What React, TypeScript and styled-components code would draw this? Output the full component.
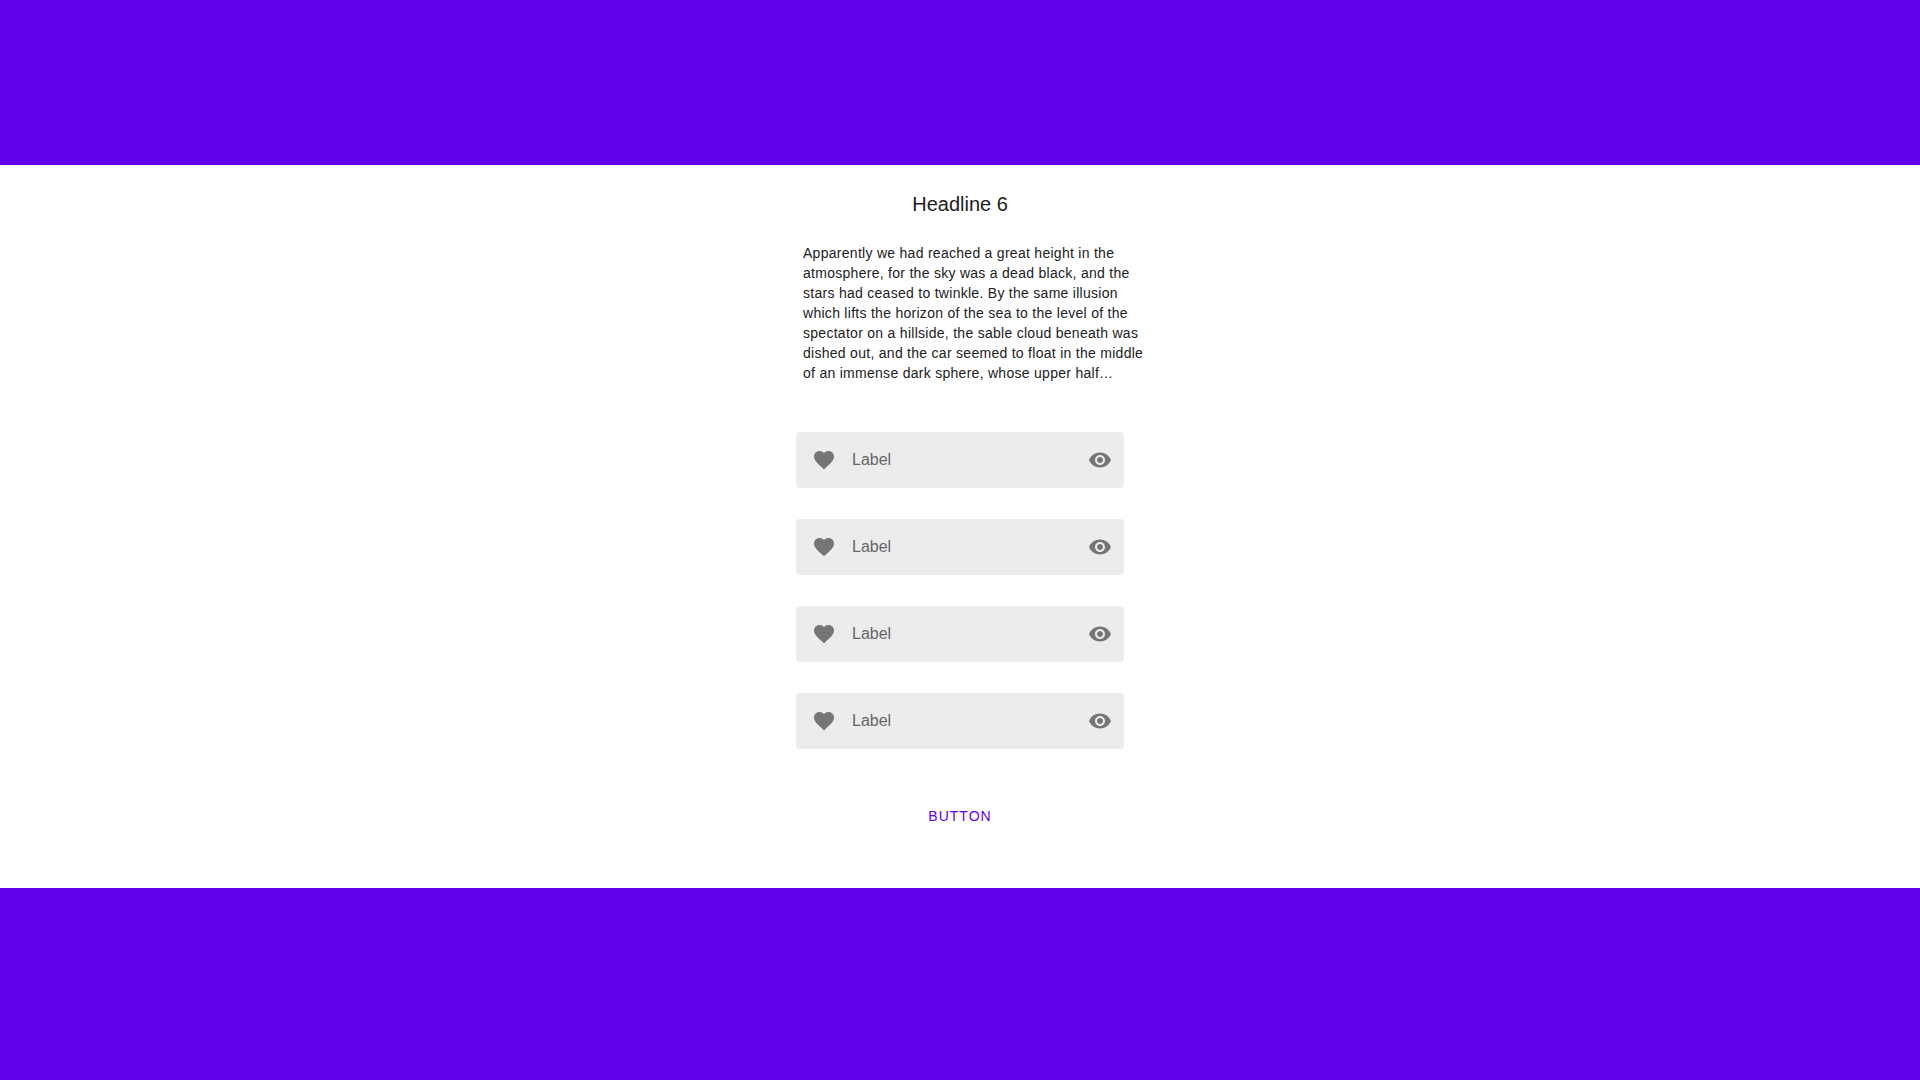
import React from "react";
import styled, { createGlobalStyle } from "styled-components";

const GlobalStyle = createGlobalStyle`
  *, *::before, *::after {
    box-sizing: border-box;
  }
  body {
    margin: 0;
    background: #6200ee;
    font-family: "Liberation Sans", Helvetica, Arial, sans-serif;
    color: #212121;
  }
`;

const Page = styled.div`
  min-height: 100vh;
  padding: 165px 0;
  background: #6200ee;
`;

const Sheet = styled.main`
  display: flex;
  flex-direction: column;
  align-items: center;
  padding: 27px 16px 54px;
  background: #ffffff;
`;

const Headline = styled.h6`
  margin: 0;
  font-size: 20px;
  font-weight: 400;
  line-height: 24px;
`;

const Column = styled.div`
  width: 328px;
  max-width: 100%;
`;

const Body = styled.p`
  width: 344px;
  margin: 27px 0 49px 7px;
  font-size: 14px;
  line-height: 20px;
  letter-spacing: 0.02em;
`;

const Fields = styled.form`
  display: grid;
  gap: 31px;
`;

const Field = styled.div`
  display: flex;
  align-items: center;
  gap: 16px;
  height: 56px;
  padding: 0 12px 0 16px;
  border-radius: 4px;
  background: #ececec;
  color: #757575;
`;

const Input = styled.input`
  flex: 1;
  min-width: 0;
  padding: 0;
  border: 0;
  outline: 0;
  background: transparent;
  color: #212121;
  font: inherit;
  font-size: 16px;
  line-height: 24px;

  &::placeholder {
    color: #666666;
    opacity: 1;
  }
`;

const IconButton = styled.button`
  display: flex;
  padding: 0;
  border: 0;
  background: transparent;
  color: inherit;
  cursor: pointer;
`;

const Icon = styled.svg`
  flex: none;
  width: 24px;
  height: 24px;
  fill: currentColor;
`;

const TextButton = styled.button`
  height: 36px;
  margin-top: 49px;
  padding: 0 8px;
  border: 0;
  border-radius: 4px;
  background: transparent;
  color: #6200ee;
  font: inherit;
  font-size: 14px;
  line-height: 16px;
  letter-spacing: 1px;
  text-transform: uppercase;
  cursor: pointer;
`;

const HEART =
  "M12 21.35l-1.45-1.32C5.4 15.36 2 12.28 2 8.5 2 5.42 4.42 3 7.5 3c1.74 0 3.41.81 4.5 2.09C13.09 3.81 14.76 3 16.5 3 19.58 3 22 5.42 22 8.5c0 3.78-3.4 6.86-8.55 11.54L12 21.35z";
const EYE =
  "M12 4.5C7 4.5 2.73 7.61 1 12c1.73 4.39 6 7.5 11 7.5s9.27-3.11 11-7.5c-1.73-4.39-6-7.5-11-7.5zM12 17c-2.76 0-5-2.24-5-5s2.24-5 5-5 5 2.24 5 5-2.24 5-5 5zm0-8c-1.66 0-3 1.34-3 3s1.34 3 3 3 3-1.34 3-3-1.34-3-3-3z";

const FIELDS = ["first", "second", "third", "fourth"];

function TextField({ id }: { id: string }) {
  return (
    <Field>
      <Icon viewBox="0 0 24 24" aria-hidden="true">
        <path d={HEART} />
      </Icon>
      <Input id={id} type="text" placeholder="Label" aria-label="Label" />
      <IconButton type="button" aria-label="Toggle visibility">
        <Icon viewBox="0 0 24 24" aria-hidden="true">
          <path d={EYE} />
        </Icon>
      </IconButton>
    </Field>
  );
}

export default function App() {
  return (
    <>
      <GlobalStyle />
      <Page>
        <Sheet>
          <Headline>Headline 6</Headline>
          <Column>
            <Body>
              Apparently we had reached a great height in the atmosphere, for
              the sky was a dead black, and the stars had ceased to twinkle. By
              the same illusion which lifts the horizon of the sea to the level
              of the spectator on a hillside, the sable cloud beneath was dished
              out, and the car seemed to float in the middle of an immense dark
              sphere, whose upper half…
            </Body>
            <Fields>
              {FIELDS.map((id) => (
                <TextField key={id} id={id} />
              ))}
            </Fields>
          </Column>
          <TextButton type="button">Button</TextButton>
        </Sheet>
      </Page>
    </>
  );
}
